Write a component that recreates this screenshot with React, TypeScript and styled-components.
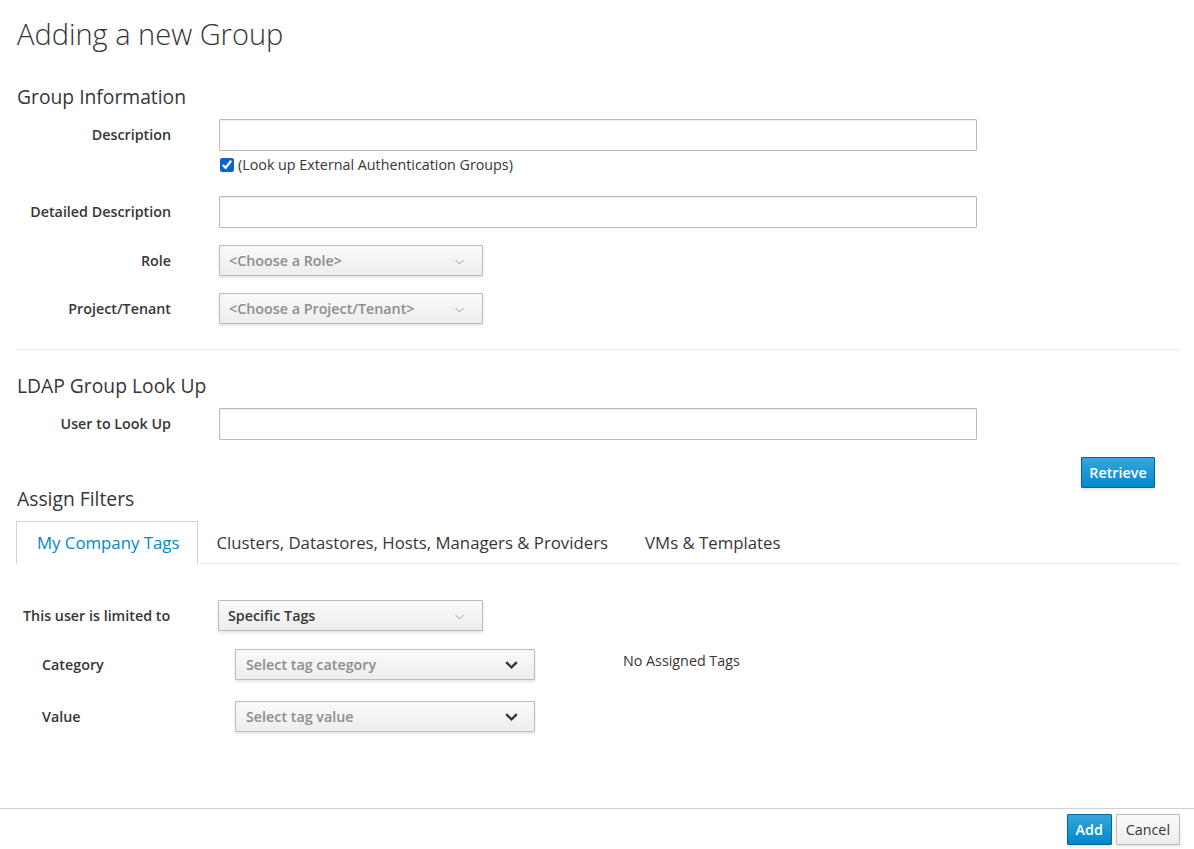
import styled, { createGlobalStyle } from "styled-components";

const GlobalStyle = createGlobalStyle`
  html, body {
    margin: 0;
    padding: 0;
    background: #fff;
  }
  body {
    font-family: "Open Sans", "Liberation Sans", sans-serif;
    font-size: 14.3px;
    color: #363636;
  }
  * {
    box-sizing: border-box;
  }
`;

const Page = styled.div`
  min-height: 100vh;
  display: flex;
  flex-direction: column;
`;

const Main = styled.main`
  flex: 1;
  padding: 0 14px 0 16px;
`;

const Title = styled.h1`
  margin: 14px 0 0 1px;
  font-size: 29px;
  line-height: 40px;
  font-weight: 300;
  color: #363636;
`;

const SectionTitle = styled.h3<{ $mt: number; $mb: number }>`
  margin: ${(p) => p.$mt}px 0 ${(p) => p.$mb}px 1px;
  font-size: 19.3px;
  line-height: 24px;
  font-weight: 400;
  color: #363636;
`;

const FormRow = styled.div`
  display: grid;
  grid-template-columns: 155px 758px;
  column-gap: 48px;
  align-items: center;
  margin-bottom: 17px;
`;

const Label = styled.label`
  text-align: right;
  font-weight: 600;
  font-size: 14.3px;
  line-height: 20px;
  color: #363636;
`;

const TextInput = styled.input`
  width: 758px;
  height: 32px;
  border: 1px solid #bbb;
  border-radius: 1px;
  box-shadow: inset 0 1px 1px rgba(3, 3, 3, 0.075);
  padding: 2px 6px;
  font: inherit;
  outline: none;
`;

const HelpLine = styled.label`
  display: flex;
  align-items: center;
  gap: 4px;
  margin: 4px 0 4px 1px;
  line-height: 20px;
  font-size: 14.3px;
  color: #363636;

  input {
    margin: 0;
    width: 14px;
    height: 14px;
    accent-color: #0a64d6;
  }
`;

const SelectButton = styled.div<{ $width: number; $muted?: boolean; $pl?: number }>`
  width: ${(p) => p.$width}px;
  height: 31px;
  display: flex;
  align-items: center;
  justify-content: space-between;
  padding: 0 18px 0 ${(p) => p.$pl ?? 9}px;
  border: 1px solid #bbb;
  border-radius: 1px;
  background-image: linear-gradient(to bottom, #fafafa 0%, #ededed 100%);
  box-shadow: 0 2px 3px rgba(3, 3, 3, 0.1);
  font-size: 14.3px;
  font-weight: 600;
  color: ${(p) => (p.$muted ? "#8b8d8f" : "#363636")};
`;

const TagSelect = styled(SelectButton)`
  padding-right: 16px;
`;

const Divider = styled.hr`
  margin: 25px 0 0;
  border: 0;
  border-top: 1px solid #ededed;
`;

const ButtonRow = styled.div`
  display: flex;
  justify-content: flex-end;
  padding-right: 25px;
`;

const Button = styled.button<{ $primary?: boolean }>`
  height: 31px;
  padding: 0 ${(p) => (p.$primary ? 8 : 9)}px;
  border-radius: 1px;
  font-family: inherit;
  font-size: 14.3px;
  font-weight: ${(p) => (p.$primary ? 600 : 400)};
  line-height: 20px;
  cursor: pointer;
  color: ${(p) => (p.$primary ? "#fff" : "#363636")};
  border: 1px solid ${(p) => (p.$primary ? "#00659c" : "#bbb")};
  background-image: ${(p) =>
    p.$primary
      ? "linear-gradient(to bottom, #39a5dc 0%, #0088ce 100%)"
      : "linear-gradient(to bottom, #fafafa 0%, #ededed 100%)"};
  box-shadow: 0 2px 3px rgba(3, 3, 3, 0.1);
`;

const RetrieveButton = styled(Button)`
  width: 74px;
  padding: 0;
`;

const Tabs = styled.ul`
  display: flex;
  list-style: none;
  margin: 10px 0 0;
  padding: 0;
  border-bottom: 1px solid #ededed;
`;

const Tab = styled.li<{ $active?: boolean }>`
  padding: 10px 18px 10px ${(p) => (p.$active ? 20 : 17)}px;
  margin-bottom: -1px;
  font-size: 16.8px;
  line-height: 21px;
  color: ${(p) => (p.$active ? "#0088ce" : "#363636")};
  background: ${(p) => (p.$active ? "#fff" : "transparent")};
  border: 1px solid ${(p) => (p.$active ? "#d1d1d1" : "transparent")};
  border-bottom-color: ${(p) => (p.$active ? "#fff" : "transparent")};
`;

const FilterRow = styled.div<{ $indent: number; $mt: number }>`
  display: flex;
  align-items: flex-start;
  padding-left: ${(p) => p.$indent}px;
  margin-top: ${(p) => p.$mt}px;
`;

const FilterLabel = styled.div<{ $width: number }>`
  width: ${(p) => p.$width}px;
  line-height: 31px;
  font-size: 14.3px;
  font-weight: 600;
  color: #363636;
`;

const NoTags = styled.div`
  margin-left: 88px;
  line-height: 24px;
  font-size: 14.3px;
  color: #363636;
`;

const Footer = styled.footer`
  display: flex;
  justify-content: flex-end;
  gap: 4px;
  padding: 5px 14px 4px;
  border-top: 1px solid #d1d1d1;
`;

function AngleDown() {
  return (
    <svg width="9" height="6" viewBox="0 0 9 6" style={{ marginTop: 2 }}>
      <polyline points="0.5,1 4.5,5 8.5,1" fill="none" stroke="#9a9a9a" strokeWidth="1" />
    </svg>
  );
}

function ChevronDown() {
  return (
    <svg width="13" height="8" viewBox="0 0 13 8">
      <polyline points="1.2,1.2 6.5,6.3 11.8,1.2" fill="none" stroke="#363636" strokeWidth="2.4" />
    </svg>
  );
}

export default function App() {
  return (
    <>
      <GlobalStyle />
      <Page>
        <Main>
          <Title>Adding a new Group</Title>

          <SectionTitle $mt={31} $mb={10}>Group Information</SectionTitle>
          <FormRow>
            <Label>Description</Label>
            <TextInput type="text" />
          </FormRow>
          <FormRow style={{ marginTop: -17 }}>
            <span />
            <HelpLine>
              <input type="checkbox" defaultChecked />
              (Look up External Authentication Groups)
            </HelpLine>
          </FormRow>
          <FormRow>
            <Label>Detailed Description</Label>
            <TextInput type="text" />
          </FormRow>
          <FormRow>
            <Label>Role</Label>
            <SelectButton $width={264} $muted>
              &lt;Choose a Role&gt;
              <AngleDown />
            </SelectButton>
          </FormRow>
          <FormRow>
            <Label>Project/Tenant</Label>
            <SelectButton $width={264} $muted>
              &lt;Choose a Project/Tenant&gt;
              <AngleDown />
            </SelectButton>
          </FormRow>

          <Divider />

          <SectionTitle $mt={24} $mb={10}>LDAP Group Look Up</SectionTitle>
          <FormRow>
            <Label>User to Look Up</Label>
            <TextInput type="text" />
          </FormRow>
          <ButtonRow>
            <RetrieveButton $primary>Retrieve</RetrieveButton>
          </ButtonRow>

          <SectionTitle $mt={-1} $mb={0}>Assign Filters</SectionTitle>
          <Tabs>
            <Tab $active>My Company Tags</Tab>
            <Tab>Clusters, Datastores, Hosts, Managers &amp; Providers</Tab>
            <Tab>VMs &amp; Templates</Tab>
          </Tabs>

          <FilterRow $indent={7} $mt={36}>
            <FilterLabel $width={195}>This user is limited to</FilterLabel>
            <SelectButton $width={265}>
              Specific Tags
              <AngleDown />
            </SelectButton>
          </FilterRow>
          <FilterRow $indent={26} $mt={18}>
            <FilterLabel $width={193}>Category</FilterLabel>
            <TagSelect $width={300} $muted $pl={10}>
              Select tag category
              <ChevronDown />
            </TagSelect>
            <NoTags>No Assigned Tags</NoTags>
          </FilterRow>
          <FilterRow $indent={26} $mt={21}>
            <FilterLabel $width={193}>Value</FilterLabel>
            <TagSelect $width={300} $muted $pl={10}>
              Select tag value
              <ChevronDown />
            </TagSelect>
          </FilterRow>
        </Main>

        <Footer>
          <Button $primary>Add</Button>
          <Button>Cancel</Button>
        </Footer>
      </Page>
    </>
  );
}
